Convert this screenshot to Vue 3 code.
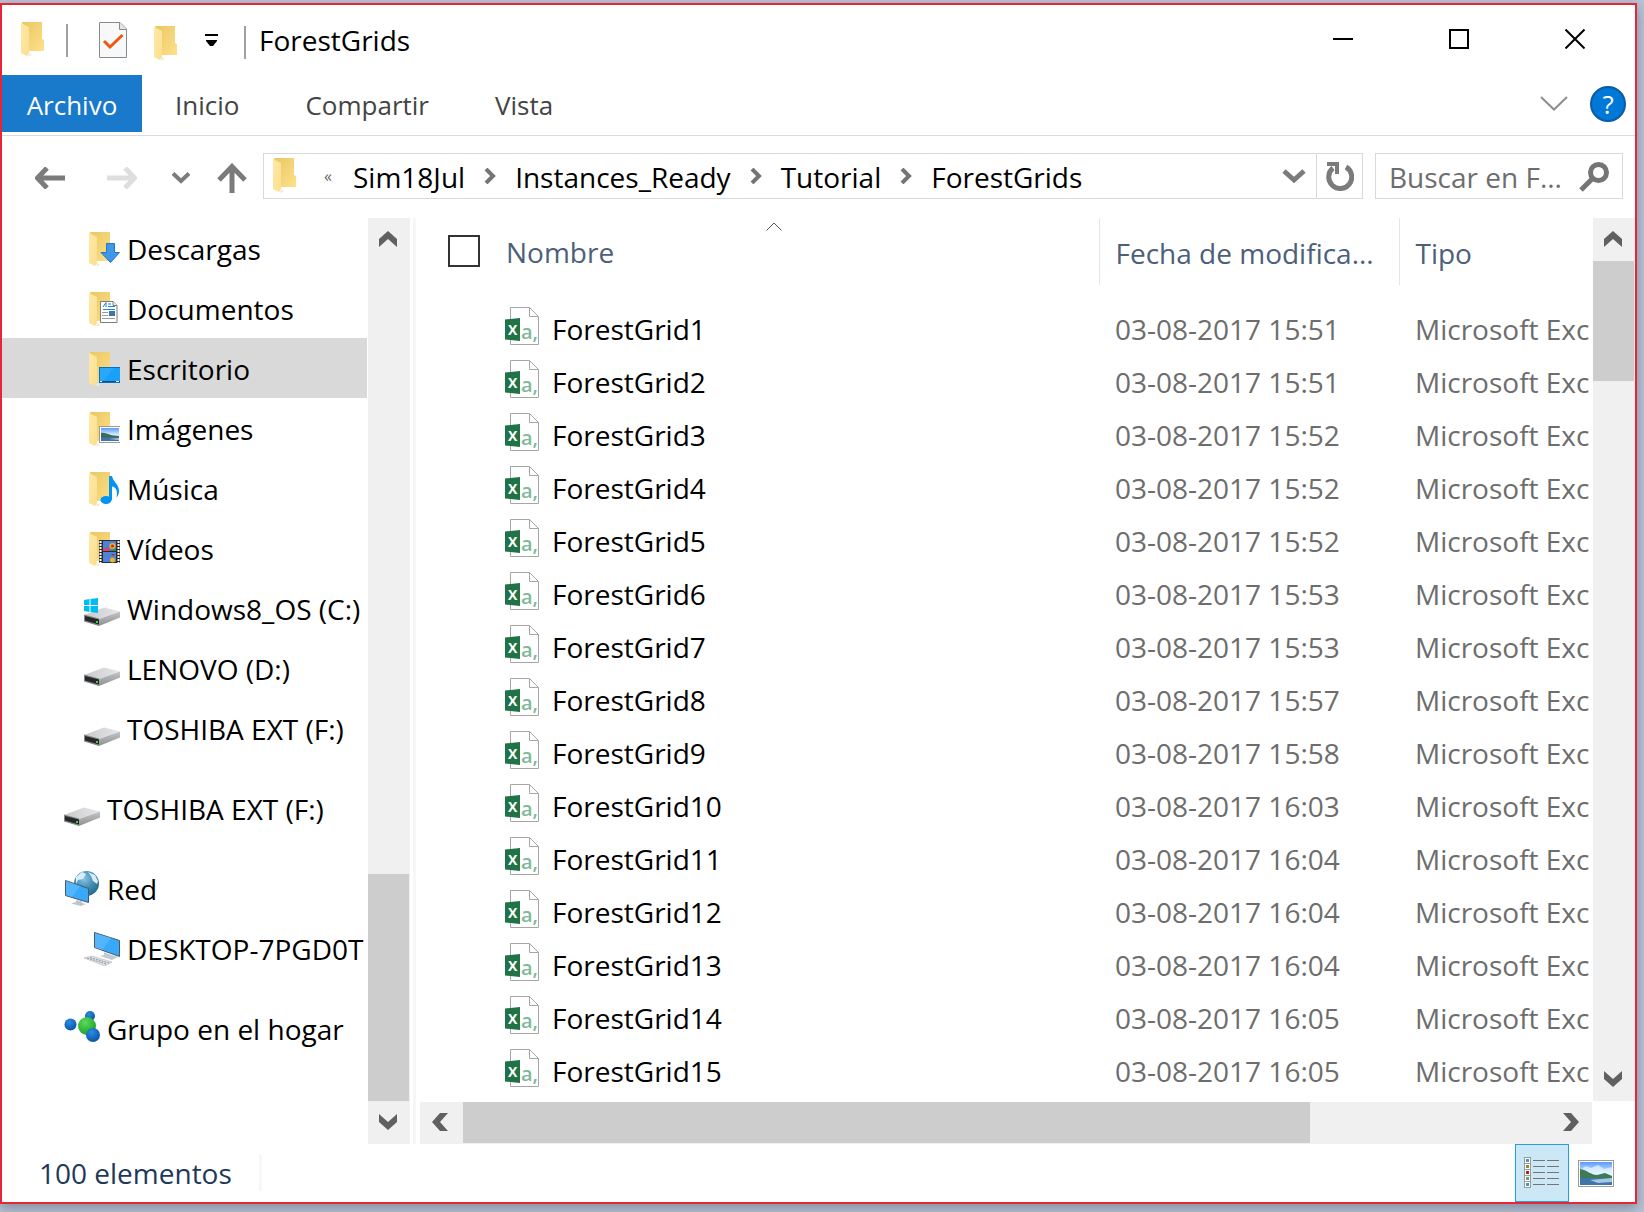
<script setup>
const tabs = ['Inicio', 'Compartir', 'Vista']
const crumbs = ['Sim18Jul', 'Instances_Ready', 'Tutorial', 'ForestGrids']

const places = [
  [
    { icon: 'downloads', label: 'Descargas', nested: true },
    { icon: 'documents', label: 'Documentos', nested: true },
    { icon: 'desktop', label: 'Escritorio', nested: true, selected: true },
    { icon: 'pictures', label: 'Imágenes', nested: true },
    { icon: 'music', label: 'Música', nested: true },
    { icon: 'videos', label: 'Vídeos', nested: true },
    { icon: 'system-drive', label: 'Windows8_OS (C:)', nested: true },
    { icon: 'drive', label: 'LENOVO (D:)', nested: true },
    { icon: 'drive', label: 'TOSHIBA EXT (F:)', nested: true },
  ],
  [{ icon: 'drive', label: 'TOSHIBA EXT (F:)' }],
  [
    { icon: 'network', label: 'Red' },
    { icon: 'computer', label: 'DESKTOP-7PGD0T', nested: true },
  ],
  [{ icon: 'homegroup', label: 'Grupo en el hogar' }],
]

const times = [
  '15:51', '15:51', '15:52', '15:52', '15:52', '15:53', '15:53', '15:57',
  '15:58', '16:03', '16:04', '16:04', '16:04', '16:05', '16:05',
]
const files = times.map((time, i) => ({
  name: `ForestGrid${i + 1}`,
  modified: `03-08-2017 ${time}`,
  type: 'Microsoft Exc',
}))
</script>

<template>
  <svg class="sprite" width="0" height="0" aria-hidden="true">
    <defs>
      <linearGradient id="g-back" x1="0" y1="0" x2="1" y2="1">
        <stop offset="0" stop-color="#e9c763" /><stop offset="1" stop-color="#ffe08a" />
      </linearGradient>
      <linearGradient id="g-flap" x1="0" y1="0" x2="1" y2="1">
        <stop offset="0" stop-color="#ffe9a8" /><stop offset="1" stop-color="#fbdf8c" />
      </linearGradient>
      <linearGradient id="g-top" x1="0" y1="0" x2="1" y2="0">
        <stop offset="0" stop-color="#c9cacc" /><stop offset="1" stop-color="#e6e6e8" />
      </linearGradient>
      <linearGradient id="g-side" x1="0" y1="0" x2="0" y2="1">
        <stop offset="0" stop-color="#c4c5c7" /><stop offset="1" stop-color="#8f9092" />
      </linearGradient>
      <linearGradient id="g-sky" x1="0" y1="0" x2="0" y2="1">
        <stop offset="0" stop-color="#5b9bff" /><stop offset="0.5" stop-color="#d3ecfb" />
        <stop offset="1" stop-color="#a9d3ea" />
      </linearGradient>
      <radialGradient id="g-globe" cx="0.4" cy="0.3" r="0.8">
        <stop offset="0" stop-color="#8cc4de" /><stop offset="0.5" stop-color="#3f8db3" />
        <stop offset="1" stop-color="#22607f" />
      </radialGradient>
      <radialGradient id="g-blue" cx="0.4" cy="0.3" r="0.7">
        <stop offset="0" stop-color="#2d8be0" /><stop offset="1" stop-color="#0b56a8" />
      </radialGradient>
      <radialGradient id="g-green" cx="0.4" cy="0.3" r="0.7">
        <stop offset="0" stop-color="#5fd75c" /><stop offset="1" stop-color="#18a52a" />
      </radialGradient>
    </defs>

    <symbol id="i-folder" viewBox="0 0 24 36">
      <path d="M1 0H21V17L23 18V29H8Z" fill="url(#g-back)" />
      <path d="M0 1L8 5V31L6 34L0 31Z" fill="url(#g-flap)" />
      <path d="M8 31L11 33L7 35Z" fill="#f3ead2" />
    </symbol>
    <symbol id="i-photo" viewBox="0 0 36 27">
      <rect x="0.5" y="0.5" width="35" height="26" fill="#fff" stroke="#9a9a9a" />
      <rect x="2" y="2" width="32" height="23" fill="url(#g-sky)" />
      <path d="M2 10L8 6L13 8L20 5L26 9L34 7V17H2Z" fill="#eaf6fd" opacity="0.7" />
      <path d="M2 9C9 10 13 15 19 15L27 13L34 16V19H2Z" fill="#3f7a58" />
      <path d="M2 18H34V25H2Z" fill="#3f75a8" />
      <path d="M12 20L34 18V22L20 23Z" fill="#a4c9e2" />
    </symbol>
    <symbol id="i-drive" viewBox="0 0 36 36">
      <path d="M0 25L20 17.500L36 21.500L15 29Z" fill="url(#g-top)" />
      <path d="M15 29L36 21.500V27.500L15 36Z" fill="url(#g-side)" />
      <path d="M0 24.500L15 28.500V36L0 31.500Z" fill="#838486" />
      <path d="M1 26L15 29.500V34.500L1 30.500Z" fill="#262728" />
      <rect x="12" y="31" width="2" height="2" fill="#3bd23b" />
    </symbol>
    <symbol id="i-system-drive" viewBox="0 0 36 36">
      <use href="#i-drive" width="36" height="36" />
      <path d="M0 10L5.500 9V15H0ZM6.500 9L14 8V15H6.500ZM0 16H5.500V22L0 21ZM6.500 16H14V23L6.500 22Z" fill="#00bcf2" />
    </symbol>
    <symbol id="i-downloads" viewBox="0 0 36 36">
      <use href="#i-folder" x="5" y="2" width="24" height="36" />
      <path d="M22.500 13.500H30.500V22.500H35.500L26.500 32.500L17 22.500H22.500Z" fill="#3f97e8" stroke="#2377c4" />
    </symbol>
    <symbol id="i-documents" viewBox="0 0 36 36">
      <use href="#i-folder" x="5" y="2" width="24" height="36" />
      <path d="M16.500 11.500H29L33 15.500V32.500H16.500Z" fill="#fff" stroke="#7d7d7d" />
      <path d="M29 11.500V15.500H33" fill="#eee" stroke="#7d7d7d" />
      <path d="M19 17L22 12.500V17M24 14H27M24 16.500H31M19 19.500H31" stroke="#1c86d8" fill="none" />
      <path d="M18 22.500H24M18 25.500H24M18 28.500H31" stroke="#9a9a9a" />
      <rect x="25" y="21" width="6" height="5" fill="#3f78a8" />
    </symbol>
    <symbol id="i-desktop" viewBox="0 0 36 36">
      <use href="#i-folder" x="5" y="2" width="24" height="36" />
      <rect x="15.500" y="17.500" width="21" height="15" fill="#18a0fb" stroke="#0b6fbd" />
      <path d="M16 18H30L20 30H16Z" fill="#3bb0ff" opacity="0.5" />
      <path d="M15 31.500H36" stroke="#0a4f86" />
      <path d="M16 31.500H18M32 31.500H35" stroke="#fff" />
    </symbol>
    <symbol id="i-pictures" viewBox="0 0 36 36">
      <use href="#i-folder" x="5" y="2" width="24" height="36" />
      <rect x="15.500" y="16.500" width="21" height="16" fill="#fff" stroke="#9a9a9a" />
      <rect x="17" y="18" width="18" height="13" fill="url(#g-sky)" />
      <path d="M17 23C22 22 25 26 35 26V28H17Z" fill="#3f6a58" />
      <path d="M17 27.500H35V31H17Z" fill="#3f75a8" />
      <path d="M25 29L35 28V30Z" fill="#a4c9e2" />
    </symbol>
    <symbol id="i-music" viewBox="0 0 36 36">
      <use href="#i-folder" x="5" y="2" width="24" height="36" />
      <ellipse cx="22" cy="30" rx="5.500" ry="4" fill="#0095f5" />
      <path d="M25 6H28C29 12 35 14 35 21C35 24 34 26 32.500 27.500C34 21 32 17 28 16.500V30H25Z" fill="#0095f5" />
    </symbol>
    <symbol id="i-videos" viewBox="0 0 36 36">
      <use href="#i-folder" x="5" y="2" width="24" height="36" />
      <rect x="15" y="10" width="21" height="23" fill="#2c2c2c" />
      <path d="M16.500 11V33M34.500 11V33" stroke="#fff" stroke-width="2" stroke-dasharray="2 1" />
      <rect x="19" y="11" width="13" height="10" fill="#4d82d8" />
      <rect x="19" y="22" width="13" height="10" fill="#4d82d8" />
      <circle cx="28.500" cy="16" r="3" fill="#f2b31f" /><circle cx="28.500" cy="16" r="1.500" fill="#c8261d" />
      <path d="M19 19L24 17L26 21H19Z" fill="#d9446a" /><path d="M25 21H32V19Z" fill="#2b8f35" />
      <circle cx="28.500" cy="30" r="2.500" fill="#f2b31f" /><path d="M27 24H31L29 26Z" fill="#c8261d" />
    </symbol>
    <symbol id="i-network" viewBox="0 0 36 36">
      <circle cx="22.500" cy="13.500" r="12.500" fill="url(#g-globe)" />
      <path d="M12 7L18 2L22 4L19 9L14 10L12 14ZM24 2L31 5L34 11L33 14L29 11L27 6Z" fill="#d8edf5" />
      <path d="M1.500 10.500L24.500 18.500V32.500L1.500 25.500Z" fill="#38a9f8" stroke="#4a5a68" />
      <path d="M2 11L16 16L8 27L2 25Z" fill="#66c0ff" opacity="0.6" />
      <path d="M12 30L18 31.500V33L22 34L17 36L7 33.500L12 32Z" fill="#bcc5cc" />
    </symbol>
    <symbol id="i-computer" viewBox="0 0 36 36">
      <path d="M10.500 2.500L35.500 10.500V26.500L10.500 17.500Z" fill="#38a9f8" stroke="#4a5a68" />
      <path d="M11 3L27 8L18 20L11 17.500Z" fill="#66c0ff" opacity="0.6" />
      <path d="M20 22L26 24.500L34 27L28 30L16 26L20 25Z" fill="#c3cad0" />
      <path d="M0 28L8 26L28 32L21 36Z" fill="#e3e6e9" stroke="#a3a9ae" stroke-width="0.500" />
      <path d="M3 28L22 34M6 27.500L25 33" stroke="#8d949a" stroke-dasharray="2 1" />
    </symbol>
    <symbol id="i-homegroup" viewBox="0 0 36 36">
      <circle cx="26" cy="6" r="5" fill="url(#g-blue)" />
      <circle cx="6.500" cy="14.500" r="6" fill="url(#g-blue)" />
      <circle cx="23" cy="16" r="9" fill="url(#g-green)" />
      <circle cx="29" cy="25" r="7" fill="url(#g-blue)" />
    </symbol>
    <symbol id="i-csv" viewBox="0 0 34 38">
      <path d="M5.500 0.500H24.500L33.500 9.500V37.500H5.500Z" fill="#fff" stroke="#a6a6a6" />
      <path d="M24.500 0.500V9.500H33.500" fill="none" stroke="#a6a6a6" />
      <path d="M0 12.500L15 11V34L0 32.500Z" fill="#1f7346" />
    </symbol>
    <symbol id="i-chevron" viewBox="0 0 18 16">
      <path d="M0 8L9 0L18 8V16L9 8L0 16Z" fill="#606060" />
    </symbol>
    <symbol id="i-crumb" viewBox="0 0 12 16">
      <path d="M2 1L9 8L2 15" fill="none" stroke="#757575" stroke-width="4" />
    </symbol>
  </svg>

  <div class="backdrop">
    <main class="window">
      <header class="titlebar">
        <svg class="folder"><use href="#i-folder" /></svg>
        <i class="rule"></i>
        <button class="quick quick-doc" aria-label="Propiedades">
          <svg width="28" height="36" viewBox="0 0 28 36">
            <path d="M0.500 0.500H21L27.500 7V35.500H0.500Z" fill="#f7f8f9" stroke="#8a8a8a" />
            <path d="M20.500 0.500V7.500H27.500" fill="#e4e4e4" stroke="#8a8a8a" />
            <path d="M5 19L11 25L23.500 13" fill="none" stroke="#f3560f" stroke-width="3" />
          </svg>
        </button>
        <button class="quick" aria-label="Nueva carpeta">
          <svg class="folder folder-low"><use href="#i-folder" /></svg>
        </button>
        <button class="quick quick-more" aria-label="Personalizar">
          <svg width="14" height="14" viewBox="0 0 14 14"><path d="M0 1H13V3H0ZM1 7H12V8L8 13H5L1 8Z" /></svg>
        </button>
        <i class="rule"></i>
        <h1>ForestGrids</h1>
        <div class="caption">
          <button aria-label="Minimizar"><svg width="20" height="20"><path d="M0 10H20" stroke="#000" stroke-width="2" /></svg></button>
          <button aria-label="Maximizar"><svg width="20" height="20"><rect x="1" y="1" width="18" height="18" fill="none" stroke="#000" stroke-width="2" /></svg></button>
          <button aria-label="Cerrar"><svg width="20" height="20"><path d="M0.500 0.500L19.500 19.500M19.500 0.500L0.500 19.500" stroke="#000" stroke-width="2" /></svg></button>
        </div>
      </header>

      <nav class="ribbon">
        <button class="file-tab">Archivo</button>
        <button v-for="tab in tabs" :key="tab" class="tab">{{ tab }}</button>
        <button class="expand" aria-label="Expandir la cinta">
          <svg width="28" height="15"><path d="M1 1L14 13.500L27 1" fill="none" stroke="#8e8e8e" stroke-width="2" /></svg>
        </button>
        <button class="help" aria-label="Ayuda">?</button>
      </nav>

      <div class="addressbar">
        <div class="history">
          <button class="back" aria-label="Atrás">
            <svg width="30" height="22"><path d="M12 1L2.500 11L12 21M3 11H30" fill="none" stroke="#7b7b7b" stroke-width="5" /></svg>
          </button>
          <button class="forward" aria-label="Adelante">
            <svg width="30" height="22"><path d="M18 1L27.500 11L18 21M27 11H0" fill="none" stroke="#dedede" stroke-width="5" /></svg>
          </button>
          <button class="recent" aria-label="Ubicaciones recientes">
            <svg width="18" height="12"><path d="M1 1.500L9 9L17 1.500" fill="none" stroke="#7b7b7b" stroke-width="4" /></svg>
          </button>
          <button aria-label="Arriba">
            <svg width="30" height="30"><path d="M2 17L15 3.500L28 17M15 4V30" fill="none" stroke="#7b7b7b" stroke-width="5" /></svg>
          </button>
        </div>
        <div class="path">
          <svg class="folder"><use href="#i-folder" /></svg>
          <button class="crumb-more">«</button>
          <template v-for="(crumb, i) in crumbs" :key="crumb">
            <svg v-if="i" class="crumb-arrow"><use href="#i-crumb" /></svg>
            <button class="crumb">{{ crumb }}</button>
          </template>
          <button class="path-open" aria-label="Ubicaciones anteriores">
            <svg width="24" height="16"><path d="M2 3L12 12L22 3" fill="none" stroke="#7b7b7b" stroke-width="5" /></svg>
          </button>
          <button class="refresh" aria-label="Actualizar">
            <svg width="28" height="30" viewBox="0 0 28 30">
              <path d="M20 6A11.500 11.500 0 1 1 7 7" fill="none" stroke="#7b7b7b" stroke-width="5" />
              <path d="M1 1H13V13L9 13V5L1 5Z" fill="#7b7b7b" />
            </svg>
          </button>
        </div>
        <label class="search">
          <input type="text" aria-label="Buscar" placeholder="Buscar en F..." />
          <svg width="30" height="30">
            <circle cx="19.500" cy="10.500" r="8" fill="none" stroke="#757575" stroke-width="5" />
            <path d="M14 16L2 28" stroke="#757575" stroke-width="5" />
          </svg>
        </label>
      </div>

      <div class="content">
        <nav class="places">
          <ul v-for="(group, g) in places" :key="g">
            <li v-for="place in group" :key="place.label">
              <a href="#" class="place" :class="{ nested: place.nested, selected: place.selected }">
                <svg class="place-icon"><use :href="'#i-' + place.icon" /></svg>
                <span>{{ place.label }}</span>
              </a>
            </li>
          </ul>
        </nav>
        <div class="vscroll">
          <button aria-label="Subir"><svg class="chevron"><use href="#i-chevron" /></svg></button>
          <div class="track places-track"><div class="thumb"></div></div>
          <button aria-label="Bajar"><svg class="chevron down"><use href="#i-chevron" /></svg></button>
        </div>
        <div class="splitter"></div>

        <section class="files">
          <div class="files-view">
            <div class="files-body">
              <table>
                <thead>
                  <tr>
                    <th class="col-name">
                      <div class="name-head">
                        <input type="checkbox" aria-label="Seleccionar todo" />
                        <span>Nombre</span>
                        <svg class="sort" width="16" height="9"><path d="M0.500 8.500L8 1L15.500 8.500" fill="none" stroke="#555" /></svg>
                      </div>
                    </th>
                    <th class="col-date">Fecha de modifica...</th>
                    <th class="col-type">Tipo</th>
                  </tr>
                </thead>
                <tbody>
                  <tr v-for="file in files" :key="file.name">
                    <td>
                      <div class="file-name">
                        <svg class="file-icon" width="34" height="38" viewBox="0 0 34 38">
                          <use href="#i-csv" width="34" height="38" />
                          <text x="3" y="28" class="xl">X</text>
                          <text x="16" y="32" class="csv">a,</text>
                        </svg>
                        {{ file.name }}
                      </div>
                    </td>
                    <td>{{ file.modified }}</td>
                    <td>{{ file.type }}</td>
                  </tr>
                </tbody>
              </table>
            </div>
            <div class="vscroll">
              <button aria-label="Subir"><svg class="chevron"><use href="#i-chevron" /></svg></button>
              <div class="track files-track"><div class="thumb"></div></div>
              <button aria-label="Bajar"><svg class="chevron down"><use href="#i-chevron" /></svg></button>
            </div>
          </div>
          <div class="hscroll">
            <button aria-label="Izquierda"><svg class="chevron left"><use href="#i-chevron" /></svg></button>
            <div class="htrack"><div class="thumb"></div></div>
            <button aria-label="Derecha"><svg class="chevron right"><use href="#i-chevron" /></svg></button>
          </div>
        </section>
      </div>

      <footer class="status">
        <span class="count">100 elementos</span>
        <button class="view active" aria-label="Detalles">
          <svg width="36" height="32" viewBox="0 0 36 32">
            <g v-for="n in 5" :key="n">
              <rect x="0.500" :y="n * 6 - 5.500" width="6" height="6" fill="#fff" stroke="#9a9a9a" />
              <rect x="2" :y="n * 6 - 4" width="3" height="3" :fill="['#4f93c4', '#8a8a3c', '#a8251b', '#7da05a', '#4f93c4'][n - 1]" />
              <path :d="`M9 ${n * 6 - 2.500}H21M23 ${n * 6 - 2.500}H35`" stroke="#757575" />
            </g>
          </svg>
        </button>
        <button class="view" aria-label="Vistas en miniatura">
          <svg width="36" height="27"><use href="#i-photo" /></svg>
        </button>
      </footer>
    </main>
  </div>
</template>

<style>
body {
  margin: 0;
  background: #c3cad9;
}
</style>

<style scoped>
* {
  box-sizing: border-box;
}
.sprite {
  position: absolute;
}
svg {
  display: block;
  flex: none;
}
button {
  display: flex;
  align-items: center;
  justify-content: center;
  flex: none;
  margin: 0;
  padding: 0;
  border: 0;
  background: none;
  color: inherit;
  font: inherit;
}
.backdrop {
  min-height: 100vh;
  padding: 3px 7px 8px 0;
  background: #b9c3d3;
}
.window {
  display: flex;
  flex-direction: column;
  min-height: calc(100vh - 11px);
  border: 2px solid #e62536;
  background: #fff;
  box-shadow: 0 4px 12px #7f8aa0;
  color: #000;
  font: 28px/36px "Open Sans", "Noto Sans", sans-serif;
}
.folder {
  width: 24px;
  height: 36px;
}

.titlebar {
  display: flex;
  align-items: center;
  height: 70px;
  padding-left: 19px;
}
.rule {
  width: 2px;
  height: 33px;
  margin-left: 21px;
  background: #a0a0a0;
}
.quick {
  margin-left: 27px;
}
.quick-doc {
  margin-left: 31px;
}
.folder-low {
  margin-top: 8px;
}
.quick + .rule {
  margin: 4px 0 0 25px;
}
h1 {
  margin: 0 0 0 13px;
  font-size: 28px;
  font-weight: 400;
}
.caption {
  display: flex;
  margin: 0 2px 2px auto;
}
.caption button {
  width: 116px;
  height: 68px;
}

.ribbon {
  display: flex;
  align-items: center;
  height: 61px;
  padding-bottom: 3px;
  border-bottom: 1px solid #dadbdc;
  color: #444;
  font-size: 26px;
}
.file-tab {
  width: 140px;
  height: 57px;
  padding-top: 2px;
  background: #1979ca;
  color: #fff;
}
.tab {
  padding: 3px 33px 0;
}
.expand {
  margin-left: auto;
}
.help {
  width: 36px;
  height: 36px;
  margin: 0 9px 0 22px;
  border: 2px solid #0a5ca8;
  border-radius: 50%;
  background: #0078d7;
  color: #fff;
}

.addressbar {
  display: flex;
  align-items: center;
  padding: 17px 12px 19px 33px;
}
.history {
  display: flex;
  align-items: center;
  width: 228px;
  padding-top: 3px;
}
.forward {
  margin-left: 42px;
}
.recent {
  margin: 0 27px 0 35px;
}
.path {
  display: flex;
  align-items: center;
  flex: 1;
  min-width: 0;
  height: 46px;
  padding-left: 9px;
  border: 1px solid #d9d9d9;
}
.crumb-more {
  width: 56px;
  padding-left: 6px;
  color: #666;
  font-size: 16px;
}
.crumb {
  padding: 2px 19px 0;
}
.crumb-more + .crumb {
  padding-left: 0;
}
.crumb-arrow {
  width: 12px;
  height: 16px;
}
.path-open {
  width: 44px;
  margin-left: auto;
}
.refresh {
  width: 46px;
  height: 44px;
  border-left: 1px solid #d9d9d9;
}
.search {
  display: flex;
  align-items: center;
  width: 248px;
  height: 46px;
  margin-left: 12px;
  padding: 2px 13px 0;
  border: 1px solid #d9d9d9;
}
.search input {
  flex: 1;
  min-width: 0;
  padding: 0;
  border: 0;
  outline: 0;
  background: none;
  font: inherit;
}
.search input::placeholder {
  color: #6d6d6d;
  opacity: 1;
}

.content {
  display: flex;
  flex: 1;
}
.places {
  width: 365px;
  margin-right: 1px;
}
ul {
  margin: 0;
  padding: 0;
  list-style: none;
}
ul + ul {
  margin-top: 20px;
}
.place {
  display: flex;
  align-items: center;
  gap: 7px;
  height: 60px;
  padding-left: 62px;
  overflow: hidden;
  color: #000;
  text-decoration: none;
  white-space: nowrap;
}
.place.nested {
  padding-left: 82px;
}
.place.selected {
  background: #d9d9d9;
}
.place-icon {
  width: 36px;
  height: 36px;
  overflow: visible;
}
.place span {
  padding-top: 2px;
}

.vscroll {
  display: flex;
  flex-direction: column;
  width: 42px;
  background: #f0f0f0;
}
.vscroll button {
  height: 43px;
  padding: 0 2px 2px 0;
}
.track {
  flex: 1;
  padding-right: 1px;
}
.thumb {
  background: #cdcdcd;
}
.places-track {
  display: flex;
  flex-direction: column;
  justify-content: flex-end;
}
.places-track .thumb {
  height: 27%;
}
.files-track .thumb {
  height: 15%;
}
.chevron {
  width: 18px;
  height: 16px;
}
.down {
  transform: rotate(180deg);
}
.left {
  transform: rotate(-90deg);
}
.right {
  transform: rotate(90deg);
}
.splitter {
  width: 3px;
  margin: 0 4px 0 3px;
  background: #f7f7f7;
}

.files {
  display: flex;
  flex-direction: column;
  flex: 1;
  min-width: 0;
}
.files-view {
  display: flex;
  flex: 1;
}
.files-body {
  flex: 1;
  min-width: 0;
  padding-bottom: 4px;
  overflow: hidden;
}
table {
  width: 100%;
  border-collapse: collapse;
  table-layout: fixed;
  white-space: nowrap;
}
th {
  height: 67px;
  padding: 2px 0 0 16px;
  border-left: 1px solid #e5e5e5;
  color: #4c607a;
  font-weight: 400;
  text-align: left;
}
.col-name {
  padding: 0 0 1px 28px;
  border-left: 0;
}
.col-date {
  width: 300px;
}
.col-type {
  width: 194px;
}
.name-head {
  display: flex;
  align-items: center;
  position: relative;
}
.name-head span {
  padding: 2px 0 0 26px;
}
.name-head input {
  appearance: none;
  width: 32px;
  height: 32px;
  margin: 0;
  border: 2px solid #333;
  background: #fff;
}
.sort {
  position: absolute;
  top: -10px;
  left: 318px;
}
tbody::before {
  content: "";
  display: block;
  height: 17px;
}
td {
  height: 53px;
  padding: 0 0 0 16px;
  overflow: hidden;
  color: #6d6d6d;
}
td:first-child {
  padding-left: 85px;
  color: #000;
}
.file-name {
  display: flex;
  align-items: center;
  gap: 13px;
}
.file-icon {
  margin-bottom: 6px;
}
.xl {
  fill: #fff;
  font: 700 14px "Open Sans", sans-serif;
}
.csv {
  fill: #7fba98;
  font: 600 20px "Open Sans", sans-serif;
}

.hscroll {
  display: flex;
  height: 42px;
  margin: 1px 43px 0 0;
  background: #f0f0f0;
}
.hscroll button {
  width: 43px;
  padding-bottom: 2px;
}
.hscroll button:first-child {
  padding-right: 3px;
}
.htrack {
  flex: 1;
  display: flex;
  padding-bottom: 1px;
}
.htrack .thumb {
  width: 78%;
}

.status {
  display: flex;
  align-items: center;
  height: 58px;
  padding-right: 12px;
  color: #1e395b;
}
.count {
  margin-right: auto;
  padding: 0 27px 0 37px;
  border-right: 3px solid #f7f7f7;
}
.view {
  width: 54px;
  height: 58px;
}
.view.active {
  border: 1px solid #26a0da;
  background: #cce8f6;
}
</style>
